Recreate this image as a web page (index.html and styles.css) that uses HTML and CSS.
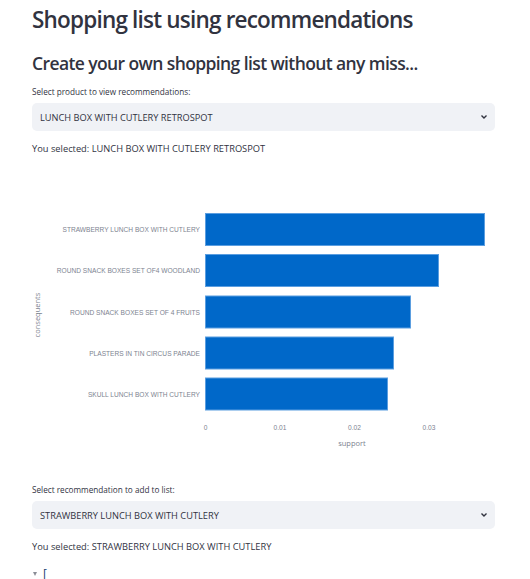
FILE: index.html
```html
<!DOCTYPE html>
<html lang="en">
<head>
    <meta charset="UTF-8">
    <meta name="viewport" content="width=device-width, initial-scale=1.0">
    <title>Shopping list using recommendations</title>
    <link rel="stylesheet" href="styles.css">
</head>
<body>
    <main class="app">
        <h1 class="title">Shopping list using recommendations</h1>
        <h2 class="subtitle">Create your own shopping list without any miss...</h2>

        <div class="field">
            <label class="field-label">Select product to view recommendations:</label>
            <div class="select-box">
                <span>LUNCH BOX WITH CUTLERY RETROSPOT</span>
                <svg class="chevron" width="8" height="6" viewBox="0 0 8 6"><path d="M1.5 1.5 L4 4 L6.5 1.5" fill="none" stroke="#31333f" stroke-width="1.4"/></svg>
            </div>
        </div>
        <p class="selected">You selected: LUNCH BOX WITH CUTLERY RETROSPOT</p>

        <!-- recommendations chart -->
        <svg class="chart" width="463" height="303" viewBox="0 0 463 303">
            <g class="bars">
                <rect x="173.5" y="42.5" width="279" height="32"/>
                <rect x="173.5" y="83.5" width="233" height="32"/>
                <rect x="173.5" y="125" width="205" height="32"/>
                <rect x="173.5" y="166" width="188" height="32"/>
                <rect x="173.5" y="207" width="182" height="32"/>
            </g>
            <g class="y-labels" text-anchor="end">
                <text x="168" y="61">STRAWBERRY LUNCH BOX WITH CUTLERY</text>
                <text x="168" y="102">ROUND SNACK BOXES SET OF4 WOODLAND</text>
                <text x="168" y="143.5">ROUND SNACK BOXES SET OF 4 FRUITS</text>
                <text x="168" y="184.5">PLASTERS IN TIN CIRCUS PARADE</text>
                <text x="168" y="225.5">SKULL LUNCH BOX WITH CUTLERY</text>
            </g>
            <g class="x-labels" text-anchor="middle">
                <text x="173.5" y="259">0</text>
                <text x="248" y="259">0.01</text>
                <text x="322.5" y="259">0.02</text>
                <text x="397" y="259">0.03</text>
            </g>
            <text class="axis-title" x="320" y="275" text-anchor="middle">support</text>
            <text class="axis-title" transform="translate(8 144) rotate(-90)" text-anchor="middle">consequents</text>
        </svg>

        <div class="field">
            <label class="field-label">Select recommendation to add to list:</label>
            <div class="select-box">
                <span>STRAWBERRY LUNCH BOX WITH CUTLERY</span>
                <svg class="chevron" width="8" height="6" viewBox="0 0 8 6"><path d="M1.5 1.5 L4 4 L6.5 1.5" fill="none" stroke="#31333f" stroke-width="1.4"/></svg>
            </div>
        </div>
        <p class="selected">You selected: STRAWBERRY LUNCH BOX WITH CUTLERY</p>

        <div class="json-view">
            <span class="caret"></span>
            <span class="bracket">[</span>
        </div>
    </main>
</body>
</html>
```

FILE: styles.css
```css
/* General Styles */
body {
    font-family: 'Open Sans', 'Noto Sans', sans-serif;
    margin: 0;
    padding: 0;
    background: #ffffff;
    color: #31333f;
    overflow: hidden;
}

.app {
    width: 463px;
    padding: 0 0 0 32px;
}

.title {
    font-size: 22.5px;
    font-weight: 600;
    letter-spacing: -0.8px;
    margin: 0;
    padding-top: 4px;
    line-height: 32px;
}

.subtitle {
    font-size: 17.5px;
    font-weight: 600;
    letter-spacing: -0.6px;
    margin: 14px 0 0;
    line-height: 26px;
}

.field {
    margin-top: 10px;
}

.field-label {
    display: block;
    font-size: 8.2px;
    line-height: 12px;
    margin-bottom: 5px;
}

.select-box {
    display: flex;
    justify-content: space-between;
    align-items: center;
    height: 28px;
    padding: 0 7px 0 8px;
    background-color: #f0f2f6;
    border-radius: 5px;
    font-size: 9.25px;
}

.chevron {
    display: block;
}

.selected {
    font-size: 9.3px;
    margin: 12px 0 0;
    line-height: 12px;
}

/* Chart */
.chart {
    display: block;
    margin-top: 16px;
}

.bars rect {
    fill: #0068c9;
    stroke: #5b9ee0;
    stroke-width: 1;
}

.y-labels text,
.x-labels text {
    font-family: 'Liberation Sans', sans-serif;
    font-size: 6.6px;
    fill: #7d8390;
}

.axis-title {
    font-family: 'Open Sans', sans-serif;
    font-size: 7.5px;
    fill: #7d8390;
}

.json-view {
    display: flex;
    align-items: center;
    gap: 6px;
    margin-top: 14px;
    padding-left: 1px;
    font-size: 12px;
    line-height: 14px;
}

.caret {
    width: 0;
    height: 0;
    border-left: 2.5px solid transparent;
    border-right: 2.5px solid transparent;
    border-top: 4px solid #8a8d96;
}

.bracket {
    color: #1f3f73;
}
```
